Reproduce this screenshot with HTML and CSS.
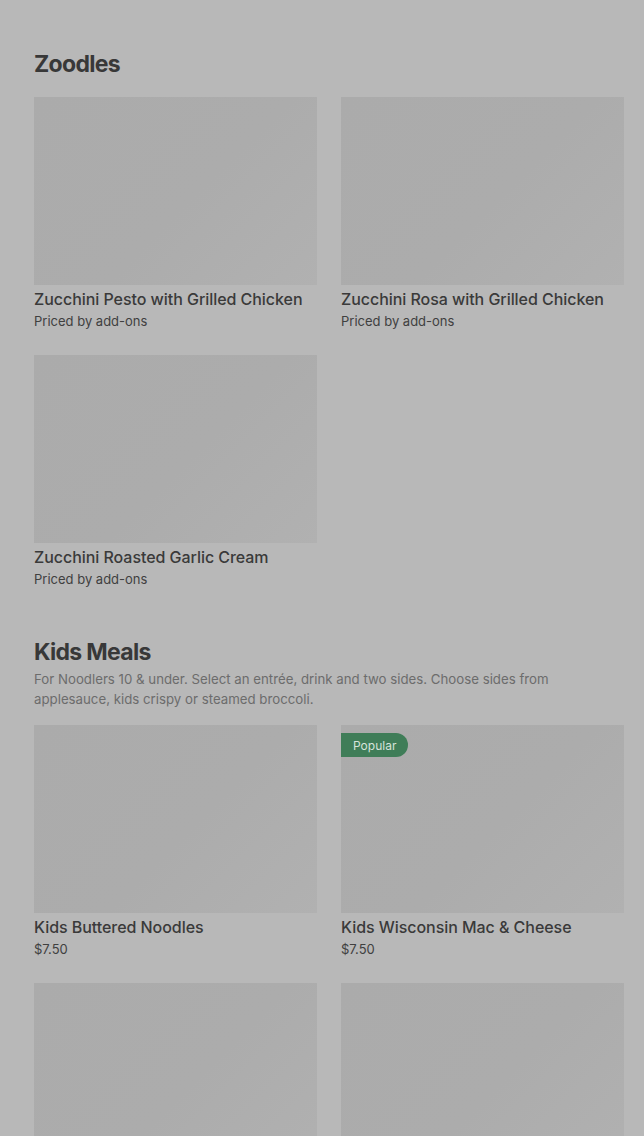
FILE: index.html
```html
<!DOCTYPE html>
<html>
<head>
<meta charset="utf-8">
<link rel="stylesheet" href="styles.css">
</head>
<body>
<main class="menu">
  <section class="section">
    <h2 class="section-title">Zoodles</h2>
    <div class="grid">
      <div class="card">
        <div class="thumb"></div>
        <div class="name">Zucchini Pesto with Grilled Chicken</div>
        <div class="price">Priced by add-ons</div>
      </div>
      <div class="card">
        <div class="thumb"></div>
        <div class="name">Zucchini Rosa with Grilled Chicken</div>
        <div class="price">Priced by add-ons</div>
      </div>
      <div class="card">
        <div class="thumb"></div>
        <div class="name">Zucchini Roasted Garlic Cream</div>
        <div class="price">Priced by add-ons</div>
      </div>
    </div>
  </section>
  <section class="section">
    <h2 class="section-title">Kids Meals</h2>
    <p class="section-desc">For Noodlers 10 &amp; under. Select an entrée, drink and two sides. Choose sides from applesauce, kids crispy or steamed broccoli.</p>
    <div class="grid">
      <div class="card">
        <div class="thumb"></div>
        <div class="name">Kids Buttered Noodles</div>
        <div class="price">$7.50</div>
      </div>
      <div class="card">
        <div class="thumb"><span class="badge">Popular</span></div>
        <div class="name">Kids Wisconsin Mac &amp; Cheese</div>
        <div class="price">$7.50</div>
      </div>
      <div class="card">
        <div class="thumb"></div>
      </div>
      <div class="card">
        <div class="thumb"></div>
      </div>
    </div>
  </section>
</main>
</body>
</html>
```
FILE: styles.css
```css
html, body {
  margin: 0;
  padding: 0;
  background: #b8b8b8;
}
body {
  font-family: Inter, "Liberation Sans", sans-serif;
  color: #3a3a3a;
  overflow: hidden;
}
.menu {
  padding: 0 20px 0 34px;
}
.section {
  padding-top: 48px;
}
.section + .section {
  padding-top: 47px;
}
.section-title {
  margin: 0 0 17px;
  font-size: 23px;
  line-height: 32px;
  font-weight: 700;
  letter-spacing: -0.7px;
  color: #383838;
}
.section-desc {
  margin: -16px 0 16px;
  font-size: 13.25px;
  line-height: 20px;
  color: #6c6c6c;
  max-width: 560px;
}
.grid {
  display: grid;
  grid-template-columns: 283px 283px;
  column-gap: 24px;
  row-gap: 24px;
}
.card {
  display: flex;
  flex-direction: column;
}
.thumb {
  position: relative;
  height: 188px;
  background: linear-gradient(135deg, #ababab 0%, #acacac 55%, #b1b1b1 100%);
}
.name {
  margin-top: 2px;
  font-size: 16px;
  line-height: 24px;
  font-weight: 500;
  letter-spacing: -0.05px;
  color: #3a3a3a;
  white-space: nowrap;
}
.price {
  font-size: 13px;
  line-height: 20px;
  color: #404040;
}
.badge {
  position: absolute;
  top: 8px;
  left: 0;
  height: 24px;
  padding: 0 12px;
  display: flex;
  align-items: center;
  background: #3f7d58;
  color: #d6e3da;
  font-size: 12px;
  border-radius: 0 12px 12px 0;
}
```
